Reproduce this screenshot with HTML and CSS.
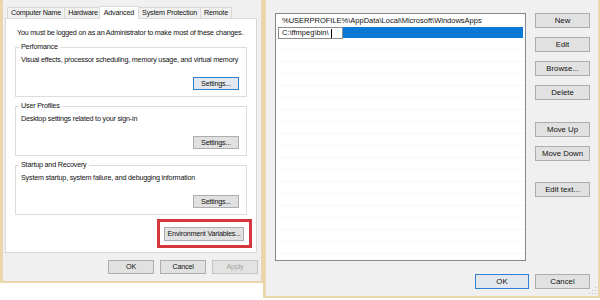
FILE: index.html
```html
<!DOCTYPE html>
<html>
<head>
<meta charset="utf-8">
<link rel="stylesheet" href="styles.css">
</head>
<body>
<div class="desk">
  <div class="win sysprops">
    <div class="tabs">
      <div class="tab">Computer Name</div>
      <div class="tab">Hardware</div>
      <div class="tab active">Advanced</div>
      <div class="tab">System Protection</div>
      <div class="tab">Remote</div>
    </div>
    <div class="panel">
      <p class="intro">You must be logged on as an Administrator to make most of these changes.</p>
      <fieldset class="group">
        <legend>Perfomance</legend>
        <p class="desc">Visual effects, processor scheduling, memory usage, and virtual memory</p>
        <div class="group-actions"><button class="btn settings focus">Settings...</button></div>
      </fieldset>
      <fieldset class="group">
        <legend>User Profiles</legend>
        <p class="desc">Desktop settings related to your sign-in</p>
        <div class="group-actions"><button class="btn settings">Settings...</button></div>
      </fieldset>
      <fieldset class="group">
        <legend>Startup and Recovery</legend>
        <p class="desc">System startup, system failure, and debugging information</p>
        <div class="group-actions"><button class="btn settings">Settings...</button></div>
      </fieldset>
      <div class="env-row">
        <div class="highlight"><button class="btn env">Environment Variables...</button></div>
      </div>
    </div>
    <div class="footer">
      <button class="btn foot">OK</button>
      <button class="btn foot">Cancel</button>
      <button class="btn foot" disabled>Apply</button>
    </div>
  </div>

  <div class="win pathedit">
    <div class="main">
      <div class="list">
        <div class="row">%USERPROFILE%\AppData\Local\Microsoft\WindowsApps</div>
        <div class="row sel"><span class="editbox">C:\ffmpeg\bin\<span class="caret"></span></span><span class="selbar"></span></div>
      </div>
      <div class="side">
        <button class="btn side-btn">New</button>
        <button class="btn side-btn">Edit</button>
        <button class="btn side-btn">Browse...</button>
        <button class="btn side-btn">Delete</button>
        <button class="btn side-btn gap-up">Move Up</button>
        <button class="btn side-btn">Move Down</button>
        <button class="btn side-btn gap-edit">Edit text...</button>
      </div>
    </div>
    <div class="footer2">
      <button class="btn side-btn ok focus">OK</button>
      <button class="btn side-btn">Cancel</button>
    </div>
    <svg class="grip" width="8" height="8" viewBox="0 0 8 8">
      <rect x="6" y="0" width="1" height="1" fill="#bdbdbd"/>
      <rect x="3" y="3" width="1" height="1" fill="#bdbdbd"/>
      <rect x="6" y="3" width="1" height="1" fill="#bdbdbd"/>
      <rect x="0" y="6" width="1" height="1" fill="#bdbdbd"/>
      <rect x="3" y="6" width="1" height="1" fill="#bdbdbd"/>
      <rect x="6" y="6" width="1" height="1" fill="#bdbdbd"/>
    </svg>
  </div>
</div>
</body>
</html>
```

FILE: styles.css
```css
* { box-sizing: border-box; }
body {
  margin: 0;
  background: #ffffff;
  font-family: "Liberation Sans", Arial, sans-serif;
  color: #111111;
}
.desk {
  display: flex;
  align-items: flex-start;
  width: 600px;
  height: 300px;
  overflow: hidden;
}
.win {
  background: #f0f0f0;
  border-left: 3px solid #ead7a9;
  border-right: 2px solid #ead7a9;
  border-bottom: 2px solid #ead7a9;
}

/* ---------- System Properties ---------- */
.sysprops {
  width: 263px;
  height: 283px;
  display: flex;
  flex-direction: column;
  font-size: 7.2px;
  letter-spacing: -0.2px;
}
.tabs {
  display: flex;
  align-items: flex-end;
  height: 18px;
  margin-left: 4px;
}
.tab {
  height: 11px;
  line-height: 10px;
  padding: 0 3px;
  border: 1px solid #d9d9d9;
  border-bottom: none;
  margin-right: -1px;
  background: #f0f0f0;
  white-space: nowrap;
}
.tab.active {
  height: 13px;
  line-height: 12px;
  margin: 0 -1px -1px -2px;
  padding: 0 4px;
  background: #ffffff;
  position: relative;
  z-index: 1;
}
.panel {
  margin: 0 4px 0 2px;
  height: 235px;
  background: #ffffff;
  border: 1px solid #d9d9d9;
  padding: 9px 9px 0;
}
.intro {
  margin: 0 0 4px 2px;
  line-height: 10px;
  white-space: nowrap;
}
.group {
  margin: 0 0 4px;
  padding: 3px 7px 6px 5px;
  border: 1px solid #dcdcdc;
  min-width: 0;
}
.group legend {
  padding: 0 2px;
  margin-left: -2px;
  line-height: 10px;
}
.desc {
  margin: 0;
  line-height: 10px;
  white-space: nowrap;
}
.group-actions {
  display: flex;
  justify-content: flex-end;
  margin-top: 12px;
}
.btn {
  font: inherit;
  letter-spacing: inherit;
  color: #111111;
  background: #e1e1e1;
  border: 1px solid #adadad;
  padding: 0;
  margin: 0;
  white-space: nowrap;
}
.btn.focus {
  border-color: #2f7fd4;
  background: #e3e8ee;
}
.btn:disabled {
  color: #a6a6a6;
  background: #e3e3e3;
  border-color: #c4c4c4;
}
.settings {
  width: 46px;
  height: 13px;
  line-height: 11px;
}
.env-row {
  display: flex;
  justify-content: flex-end;
  margin: 2px -5px 0 0;
}
.highlight {
  border: 3px solid #d5393f;
  padding: 5px 5px 4px 4px;
}
.env {
  width: 80px;
  height: 14px;
  line-height: 12px;
}
.footer {
  display: flex;
  justify-content: flex-end;
  gap: 6px;
  margin: 7px 3px 0 0;
}
.foot {
  width: 46px;
  height: 14px;
  line-height: 12px;
}

/* ---------- Edit environment variable ---------- */
.pathedit {
  width: 337px;
  height: 298px;
  padding: 13px 8px 0 9px;
  font-size: 7.5px;
  position: relative;
}
.main {
  display: flex;
  gap: 9px;
}
.list {
  width: 251px;
  height: 248px;
  border: 1px solid #828790;
  background-color: #ffffff;
  background-image: repeating-linear-gradient(to bottom, transparent 0, transparent 11px, #f8f8f8 11px, #f8f8f8 12px);
  padding: 1px 2px;
}
.row {
  height: 12px;
  line-height: 12px;
  padding-left: 4px;
  white-space: nowrap;
}
.row.sel {
  display: flex;
  padding-left: 0;
}
.editbox {
  width: 65px;
  height: 12px;
  line-height: 10px;
  border: 1px solid #8a8a8a;
  background: #ffffff;
  padding-left: 3px;
  display: flex;
  align-items: center;
}
.caret {
  display: inline-block;
  width: 1px;
  height: 9px;
  background: #000;
  margin-left: 2px;
}
.selbar {
  flex: 1;
  height: 11px;
  background: #0a78d5;
}
.side {
  display: flex;
  flex-direction: column;
  gap: 9px;
  width: 55px;
}
.side-btn {
  width: 55px;
  height: 15px;
  line-height: 13px;
  font-size: 7.8px;
}
.gap-up { margin-top: 13px; }
.gap-edit { margin-top: 12px; }
.footer2 {
  display: flex;
  justify-content: flex-end;
  gap: 6px;
  margin-top: 13px;
}
.ok { width: 54px; }
.grip {
  position: absolute;
  right: 1px;
  bottom: 1px;
}
```
